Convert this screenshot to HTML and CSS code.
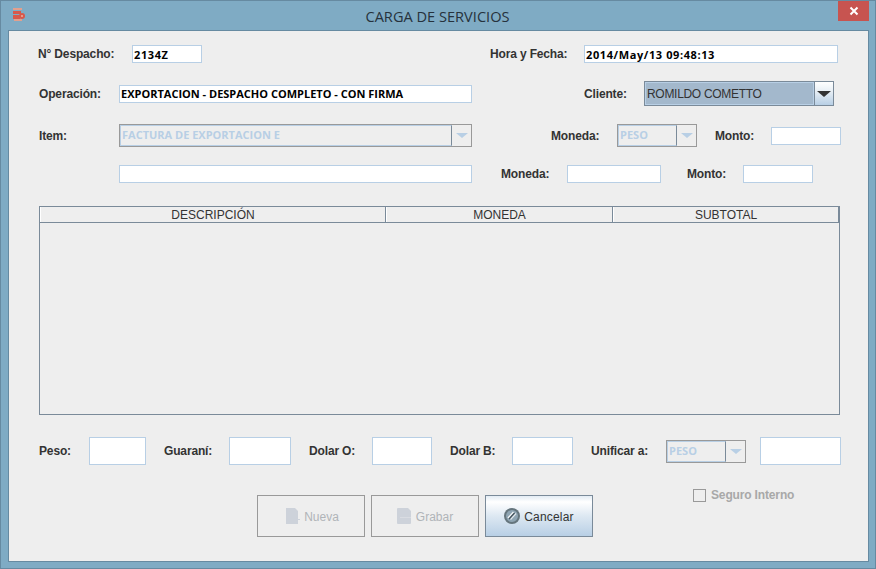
FILE: index.html
```html
<!DOCTYPE html>
<html>
	<head>
		<meta charset="utf-8">
		<title>Carga de Servicios</title>
		<link rel="stylesheet" href="styles.css">
	</head>
	<body>
		<div class="window">
			<div class="titlebar">
				<svg class="app-icon" width="12" height="13" viewBox="0 0 12 13">
					<rect x="0" y="0" width="9" height="2" fill="#e2a08e"/>
					<rect x="0" y="3" width="8" height="3" fill="#d9584a"/>
					<rect x="0" y="7" width="7" height="4" fill="#d9584a"/>
					<circle cx="9" cy="8" r="3" fill="#d9584a"/>
					<circle cx="9" cy="8" r="1" fill="#e8b0a4"/>
					<rect x="1" y="11" width="8" height="2" fill="#e2a08e"/>
				</svg>
				<div class="title">CARGA DE SERVICIOS</div>
				<div class="close">
					<svg width="10" height="10" viewBox="0 0 10 10">
						<path d="M1.5 1.5 L8.5 8.5 M8.5 1.5 L1.5 8.5" stroke="#fff" stroke-width="2"/>
					</svg>
				</div>
			</div>
			<div class="content">
				<div class="row row-1">
					<label class="lbl w-despacho shift-left">N° Despacho:</label>
					<input class="txt txt-wide w-70" type="text" value="2134Z">
					<label class="lbl w-hora m-288">Hora y Fecha:</label>
					<input class="txt txt-wide w-254" type="text" value="2014/May/13 09:48:13">
				</div>
				<div class="row row-2">
					<label class="lbl w-80">Operación:</label>
					<input class="txt w-353" type="text" value="EXPORTACION - DESPACHO COMPLETO - CON FIRMA">
					<label class="lbl w-cliente m-112">Cliente:</label>
					<div class="combo combo-active w-190">
						<div class="combo-value">ROMILDO COMETTO</div>
						<div class="combo-arrow"><span class="tri"></span></div>
					</div>
				</div>
				<div class="row row-3">
					<label class="lbl w-80">Item:</label>
					<div class="combo combo-off w-353">
						<div class="combo-value">FACTURA DE EXPORTACION E</div>
						<div class="combo-arrow"><span class="tri"></span></div>
					</div>
					<label class="lbl w-moneda m-79">Moneda:</label>
					<div class="combo combo-off w-80">
						<div class="combo-value">PESO</div>
						<div class="combo-arrow"><span class="tri"></span></div>
					</div>
					<label class="lbl w-monto m-18">Monto:</label>
					<input class="txt w-70" type="text">
				</div>
				<div class="row row-4">
					<div class="lbl w-80"></div>
					<input class="txt w-353" type="text">
					<label class="lbl w-moneda m-29">Moneda:</label>
					<input class="txt w-94" type="text">
					<label class="lbl w-monto m-26">Monto:</label>
					<input class="txt w-70" type="text">
				</div>
				<div class="grid">
					<div class="grid-head">
						<div class="col col-desc">DESCRIPCIÓN</div>
						<div class="col col-mon">MONEDA</div>
						<div class="col col-sub">SUBTOTAL</div>
					</div>
				</div>
				<div class="row row-totals">
					<label class="lbl w-50">Peso:</label>
					<input class="txt tall w-57" type="text">
					<label class="lbl w-65 m-18">Guaraní:</label>
					<input class="txt tall w-62" type="text">
					<label class="lbl w-63 m-18">Dolar O:</label>
					<input class="txt tall w-60" type="text">
					<label class="lbl w-62 m-18">Dolar B:</label>
					<input class="txt tall w-61" type="text">
					<label class="lbl w-75 m-18">Unificar a:</label>
					<div class="combo combo-off combo-small w-80">
						<div class="combo-value">PESO</div>
						<div class="combo-arrow"><span class="tri"></span></div>
					</div>
					<input class="txt tall w-81 m-14" type="text">
				</div>
				<div class="actions">
					<button class="btn btn-nueva" disabled>
						<svg width="14" height="16" viewBox="0 0 14 16">
							<path d="M0 0 H9 L12 3 V16 H0 Z" fill="#cdd2da"/>
							<rect x="12" y="11" width="2" height="1" fill="#cdd2da"/>
						</svg>
						<span class="btn-text">Nueva</span>
					</button>
					<button class="btn" disabled>
						<svg width="15" height="16" viewBox="0 0 15 16">
							<path d="M0 1 Q0 0 1 0 H11 L14 3 V15 Q14 16 13 16 H1 Q0 16 0 15 Z" fill="#cdd2da"/>
							<rect x="3" y="9" width="11" height="1" fill="#d9dce2"/>
						</svg>
						<span class="btn-text">Grabar</span>
					</button>
					<button class="btn btn-on">
						<svg width="16" height="16" viewBox="0 0 16 16">
							<circle cx="8" cy="8" r="8" fill="#65757d"/>
							<circle cx="8" cy="8" r="6" fill="#8fa5b3"/>
							<path d="M4 10 L9.5 4" stroke="#f2f5f7" stroke-width="1.5"/>
							<path d="M6.5 11.5 L12 5.5" stroke="#e4eaee" stroke-width="1.2"/>
							<path d="M5 11 L10.5 5" stroke="#45535b" stroke-width="1.2"/>
						</svg>
						<span class="btn-text">Cancelar</span>
					</button>
					<div class="check">
						<span class="box"></span>
						<span class="check-text">Seguro Interno</span>
					</div>
				</div>
			</div>
		</div>
	</body>
</html>
```

FILE: styles.css
```css
html, body {
	margin: 0;
	padding: 0;
	width: 876px;
	height: 569px;
	overflow: hidden;
	background-color: #7fabc4;
}
.window {
	box-sizing: border-box;
	width: 876px;
	height: 569px;
	display: flex;
	flex-direction: column;
	background-color: #7fabc4;
	border: 1px solid #668aa1;
}
.titlebar {
	height: 29px;
	display: flex;
	align-items: flex-start;
	flex: none;
}
.app-icon {
	margin: 7px 0 0 12px;
	flex: none;
}
.title {
	flex: 1;
	text-align: center;
	font-family: "Open Sans", sans-serif;
	font-size: 14.6px;
	line-height: 16px;
	margin: 7px 0 0 0;
	padding-left: 12px;
	color: #26323c;
}
.close {
	width: 31px;
	height: 20px;
	margin-right: 6px;
	background-color: #c75450;
	display: flex;
	align-items: center;
	justify-content: center;
	flex: none;
}
.content {
	box-sizing: border-box;
	width: 861px;
	height: 532px;
	margin-left: 7px;
	padding-left: 30px;
	background-color: #eee;
	border: 1px solid #668aa1;
}
.row {
	display: flex;
	align-items: center;
}
.row-1 { height: 18px; margin-top: 14px; }
.row-2 { height: 25px; margin-top: 18px; }
.row-3 { height: 23px; margin-top: 18px; }
.row-4 { height: 18px; margin-top: 18px; }
.row-totals { height: 28px; margin-top: 22px; }
.lbl {
	flex: none;
	font-family: "Liberation Sans", Arial, sans-serif;
	font-size: 12px;
	font-weight: bold;
	letter-spacing: -0.15px;
	color: #333;
}
.shift-left { margin-left: -1px; }
.txt {
	box-sizing: border-box;
	flex: none;
	height: 18px;
	margin: 0;
	padding: 0 1px;
	background-color: #fff;
	border: 1px solid #b8cfe5;
	border-radius: 0;
	outline: none;
	font-family: "Open Sans", sans-serif;
	font-size: 11px;
	font-weight: bold;
	color: #000;
}
.txt-wide { letter-spacing: 0.6px; }
.tall { height: 28px; }
.combo {
	box-sizing: border-box;
	flex: none;
	display: flex;
	border: 1px solid #7a8a99;
	font-family: "Open Sans", sans-serif;
	font-size: 11px;
	font-weight: bold;
}
.combo-active { height: 25px; }
.combo-off { height: 23px; border-color: #999; }
.combo-value {
	flex: 1;
	display: flex;
	align-items: center;
	padding-left: 1px;
	overflow: hidden;
	white-space: nowrap;
}
.combo-arrow {
	box-sizing: border-box;
	width: 19px;
	flex: none;
	display: flex;
	align-items: center;
	justify-content: center;
	border-left: 1px solid #7a8a99;
}
.combo-active .combo-value {
	background-color: #a3b8cc;
	border: 1px solid #b8cfe5;
	color: #333;
	font-family: "Liberation Sans", Arial, sans-serif;
	font-size: 12px;
	font-weight: normal;
	letter-spacing: -0.3px;
}
.combo-active .combo-arrow {
	background: linear-gradient(#fff, #e8eff5 40%, #b8cfe5);
}
.combo-off .combo-value {
	padding-bottom: 2px;
	color: #b8cfe5;
	border: 1px solid #b8cfe5;
	border-right: 1px solid #7a8a99;
}
.combo-off .combo-arrow {
	border-left: none;
}
.tri {
	width: 0;
	height: 0;
	border-left: 7px solid transparent;
	border-right: 7px solid transparent;
	border-top: 6px solid #333;
}
.combo-off .tri {
	border-left-width: 6px;
	border-right-width: 6px;
	border-top-width: 5px;
	border-top-color: #b8cfe5;
}
.grid {
	box-sizing: border-box;
	width: 801px;
	height: 209px;
	margin-top: 23px;
	border: 1px solid #7a8a99;
}
.grid-head {
	display: flex;
	height: 15px;
	border-bottom: 1px solid #7a8a99;
}
.col {
	box-sizing: border-box;
	text-align: center;
	font-family: "Liberation Sans", Arial, sans-serif;
	font-size: 12px;
	line-height: 16px;
	color: #333;
	border-left: 1px solid #fff;
	border-right: 1px solid #7a8a99;
}
.col-desc { width: 346px; }
.col-mon { width: 227px; }
.col-sub { width: 226px; }
.actions {
	display: flex;
	align-items: flex-start;
	margin-left: 218px;
	margin-top: 30px;
	gap: 6px;
}
.btn {
	box-sizing: border-box;
	width: 108px;
	height: 42px;
	display: flex;
	align-items: center;
	justify-content: center;
	gap: 4px;
	padding: 0;
	background: transparent;
	border: 1px solid #999;
	font-family: "Liberation Sans", Arial, sans-serif;
	font-size: 12px;
	color: #b0b4b8;
}
.btn-text { padding-top: 2px; }
.btn-nueva { padding-left: 3px; }
.btn-on {
	background: linear-gradient(#e3ecf4, #fff 15%, #dde8f2 50%, #b8cfe5);
	border-color: #7a8a99;
	color: #333;
	letter-spacing: 0.2px;
}
.check {
	display: flex;
	align-items: center;
	margin: -7px 0 0 94px;
}
.box {
	box-sizing: border-box;
	width: 13px;
	height: 13px;
	border: 1px solid #999;
}
.check-text {
	margin-left: 5px;
	font-family: "Liberation Sans", Arial, sans-serif;
	font-size: 12px;
	font-weight: bold;
	letter-spacing: -0.15px;
	color: #a8a8a8;
}
.w-despacho { width: 94px; }
.w-hora { width: 94px; }
.w-cliente { width: 60px; }
.w-moneda { width: 66px; }
.w-monto { width: 56px; }
.w-50 { width: 50px; }
.w-57 { width: 57px; }
.w-60 { width: 60px; }
.w-61 { width: 61px; }
.w-62 { width: 62px; }
.w-63 { width: 63px; }
.w-65 { width: 65px; }
.w-70 { width: 70px; }
.w-75 { width: 75px; }
.w-80 { width: 80px; }
.w-81 { width: 81px; }
.w-94 { width: 94px; }
.w-190 { width: 190px; }
.w-254 { width: 254px; }
.w-353 { width: 353px; }
.m-14 { margin-left: 14px; }
.m-18 { margin-left: 18px; }
.m-26 { margin-left: 26px; }
.m-29 { margin-left: 29px; }
.m-79 { margin-left: 79px; }
.m-112 { margin-left: 112px; }
.m-288 { margin-left: 288px; }
```
